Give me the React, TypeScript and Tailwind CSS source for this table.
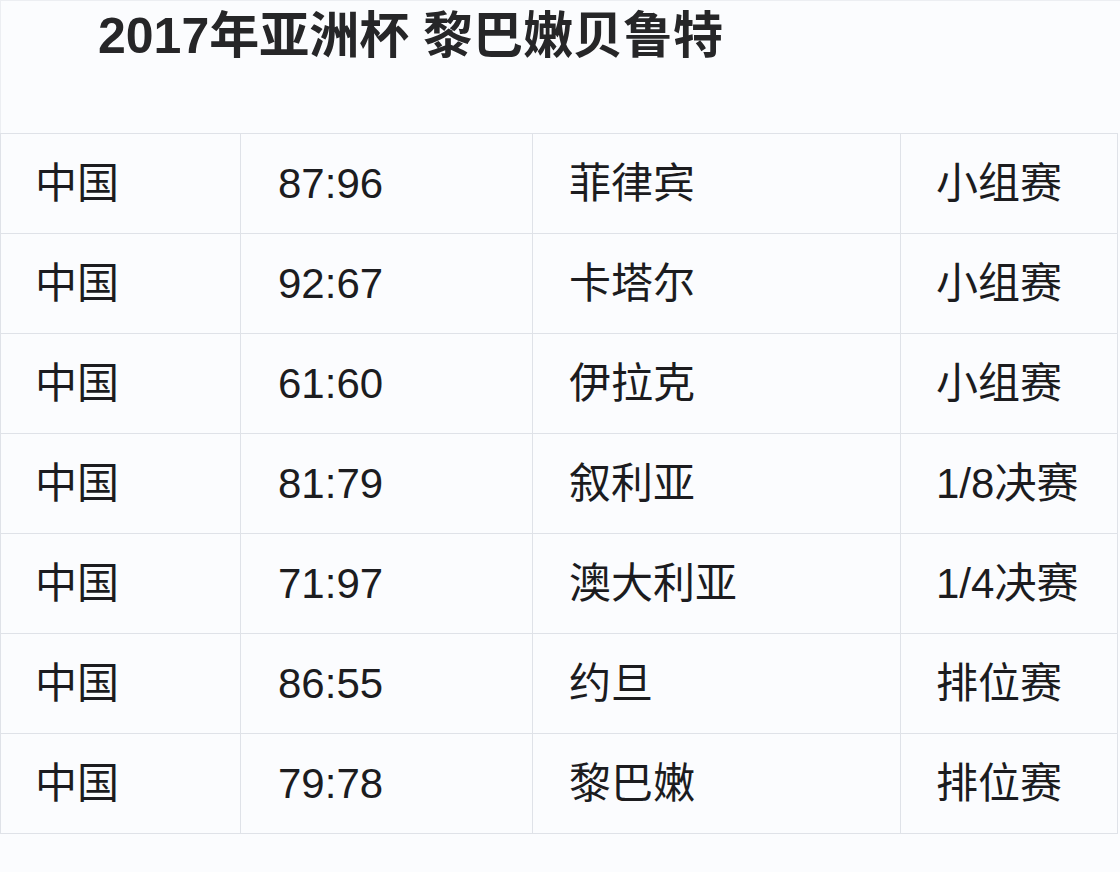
const rows = [
  ["中国", "87:96", "菲律宾", "小组赛"],
  ["中国", "92:67", "卡塔尔", "小组赛"],
  ["中国", "61:60", "伊拉克", "小组赛"],
  ["中国", "81:79", "叙利亚", "1/8决赛"],
  ["中国", "71:97", "澳大利亚", "1/4决赛"],
  ["中国", "86:55", "约旦", "排位赛"],
  ["中国", "79:78", "黎巴嫩", "排位赛"],
]

const pads = ["pl-[34px]", "pl-[37px]", "pl-[36px]", "pl-[35px]"]

export default function App() {
  return (
    <div
      className="w-[1120px] h-[872px] overflow-hidden bg-[#fbfcfe] text-[#1c1c1f]"
      style={{ fontFamily: '"Liberation Sans", "Noto Sans CJK SC", sans-serif' }}
    >
      <div className="h-[133px] border-l border-t border-[#eceef2] pl-[97px]">
        <h1 className="text-[50px] font-bold leading-[70px] text-[#262628]">
          2017年亚洲杯 黎巴嫩贝鲁特
        </h1>
      </div>

      <div className="w-[1118px] border-l border-t border-[#dfe2e8] grid grid-cols-[240px_292px_368px_217px]">
        {rows.map((row, i) =>
          row.map((cell, j) => (
            <div
              key={`${i}-${j}`}
              className={`h-[100px] flex items-center ${pads[j]} border-r border-b border-[#dfe2e8] text-[42px] leading-none`}
            >
              {cell}
            </div>
          ))
        )}
      </div>
    </div>
  )
}
